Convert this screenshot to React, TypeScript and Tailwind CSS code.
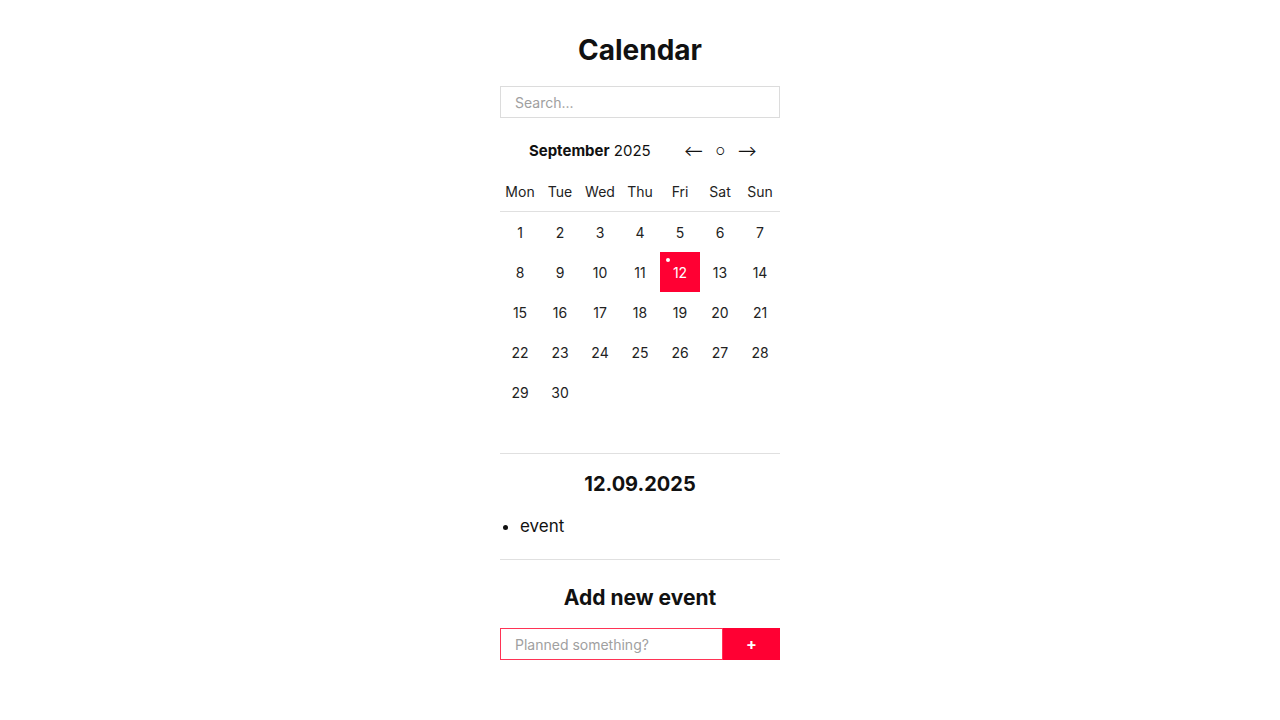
import { useState } from 'react';

const weekDays = ['Mon', 'Tue', 'Wed', 'Thu', 'Fri', 'Sat', 'Sun'];

// September 2025 starts on a Monday
const days = Array.from({ length: 30 }, (_, i) => i + 1);

export default function App() {
    const [selected, setSelected] = useState(12);
    const events: Record<number, string[]> = { 12: ['event'] };

    return (
        <div
            className="min-h-screen bg-white flex justify-center text-[#111]"
            style={{ fontFamily: 'Inter, "Noto Sans", sans-serif' }}
        >
            <div className="w-[280px] flex flex-col pt-[33px]">
                <h1 className="text-[28px] leading-[34px] font-bold text-center">Calendar</h1>

                <input
                    type="text"
                    placeholder="Search..."
                    className="mt-[19px] h-[32px] w-full border border-[#dcdcdc] px-[14px] text-[14px] outline-none placeholder:text-[#a0a0a0]"
                />

                {/* month header */}
                <div className="mt-[22px] h-[22px] flex items-center justify-center gap-[33px] pl-[6px]">
                    <div className="text-[15px]">
                        <span className="font-bold">September</span> 2025
                    </div>
                    <div className="flex items-center gap-[12px] text-[15px]">
                        <button>⟵</button>
                        <span className="text-[10px]">○</span>
                        <button>⟶</button>
                    </div>
                </div>

                <div className="mt-[9px] grid grid-cols-7 border-b border-[#e0e0e0]">
                    {weekDays.map((d) => (
                        <div key={d} className="h-[40px] flex items-center justify-center text-[14px] text-[#222]">
                            {d}
                        </div>
                    ))}
                </div>

                <div className="grid grid-cols-7">
                    {days.map((d) => {
                        const active = d === selected;
                        return (
                            <button
                                key={d}
                                onClick={() => setSelected(d)}
                                className={
                                    'relative h-[40px] flex items-center justify-center text-[14px] ' +
                                    (active ? 'bg-[#ff0033] text-white' : 'text-[#222]')
                                }
                            >
                                {events[d] && (
                                    <span
                                        className={
                                            'absolute top-[6px] left-[6px] w-[4px] h-[4px] rounded-full ' +
                                            (active ? 'bg-white' : 'bg-[#ff0033]')
                                        }
                                    />
                                )}
                                {d}
                            </button>
                        );
                    })}
                </div>

                <div className="mt-[41px] border-t border-[#e0e0e0] pt-[16px]">
                    <h2 className="text-[20px] leading-[28px] font-bold text-center">12.09.2025</h2>
                    <ul className="mt-[16px] list-disc pl-[20px] pb-[21px]">
                        {(events[selected] ?? []).map((e) => (
                            <li key={e} className="text-[17px] leading-[24px]">
                                {e}
                            </li>
                        ))}
                    </ul>
                </div>

                <div className="border-t border-[#e0e0e0] pt-[24px]">
                    <h2 className="text-[21px] leading-[28px] font-bold text-center">Add new event</h2>
                    <div className="mt-[16px] flex h-[32px]">
                        <input
                            type="text"
                            placeholder="Planned something?"
                            className="flex-1 min-w-0 border border-[#ff3355] px-[14px] text-[14px] outline-none placeholder:text-[#a0a0a0]"
                        />
                        <button className="w-[57px] bg-[#ff0033] text-white text-[16px] font-bold">+</button>
                    </div>
                </div>
            </div>
        </div>
    );
}
